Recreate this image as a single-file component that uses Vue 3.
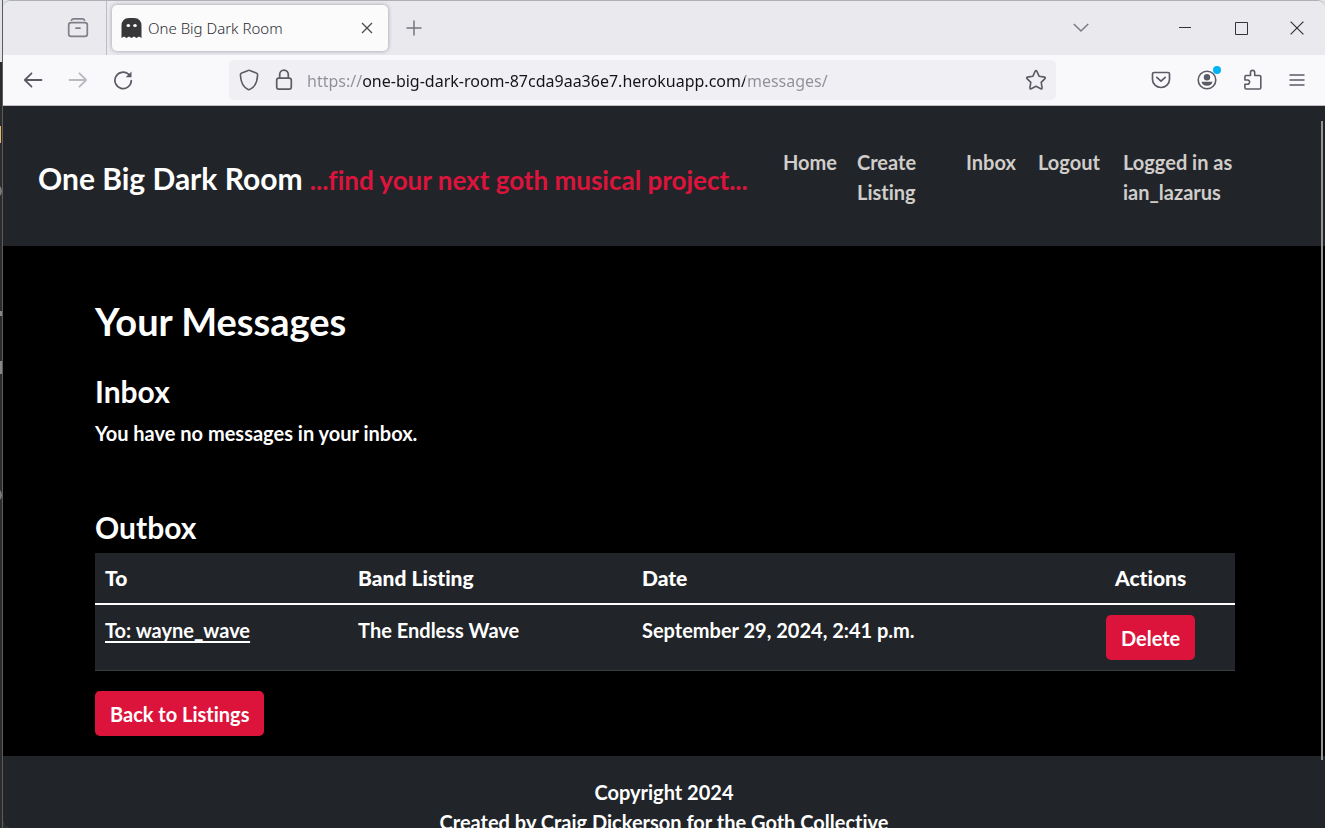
<script setup>
const messages = [
  { to: 'To: wayne_wave', listing: 'The Endless Wave', date: 'September 29, 2024, 2:41 p.m.' },
]
const links = ['Home', 'Create Listing', 'Inbox', 'Logout', 'Logged in as ian_lazarus']
</script>

<template>
  <div class="desktop">
    <div class="behind" aria-hidden="true">
      <i class="folder"></i><i class="ring first"></i><i class="dot"></i><i class="box"></i><i class="ring second"></i>
    </div>
    <div class="window">
      <div class="tabs">
        <button class="icon view" aria-label="Recent browsing">
          <svg width="22" height="22" viewBox="0 0 22 22" fill="none" stroke="#807f89" stroke-width="1.7" stroke-linecap="round">
            <path d="M4.5 3.2 Q5 1.8 6.5 1.8 H15.5 Q17 1.8 17.5 3.2" />
            <rect x="1.7" y="5.7" width="18.6" height="13.6" rx="2.4" />
            <path d="M9 11.2h4" />
          </svg>
        </button>
        <div class="tab">
          <svg width="21" height="20" viewBox="0 0 21 20">
            <path fill="#38383b" d="M.5 20V8Q.5 .3 8 0h5q7.500 .3 7.500 8v12l-2.500-1.500-2.500 1.500-2.500-1.500-2.500 1.500-2.500-1.500-2.500 1.500-2.500-1.500z" />
            <ellipse cx="7.300" cy="7.500" rx="1.800" ry="1.500" fill="#fff" />
            <ellipse cx="14" cy="7.500" rx="1.800" ry="1.500" fill="#fff" />
          </svg>
          <span class="title">One Big Dark Room</span>
          <button class="icon" aria-label="Close tab">
            <svg width="12" height="12" viewBox="0 0 12 12" stroke="#4b4b52" stroke-width="1.3"><path d="M1 1l10 10M11 1L1 11" /></svg>
          </button>
        </div>
        <button class="icon plus" aria-label="New tab">
          <svg width="16" height="16" viewBox="0 0 16 16" stroke="#77767f" stroke-width="1.500"><path d="M8 .5v15M.5 8h15" /></svg>
        </button>
        <div class="controls">
          <button class="icon" aria-label="List all tabs">
            <svg width="16" height="10" viewBox="0 0 16 10" fill="none" stroke="#7c7b84" stroke-width="1.600"><path d="M.8 1l7.200 7 7.200-7" /></svg>
          </button>
          <button class="icon" aria-label="Minimize">
            <svg width="12" height="12" viewBox="0 0 12 12" stroke="#333339"><path d="M0 5.500h12" /></svg>
          </button>
          <button class="icon" aria-label="Maximize">
            <svg width="13" height="13" viewBox="0 0 13 13" fill="none" stroke="#333339"><path d="M.5 .5h12v12H.5z" /></svg>
          </button>
          <button class="icon" aria-label="Close window">
            <svg width="14" height="14" viewBox="0 0 14 14" stroke="#333339" stroke-width="1.200"><path d="M.6 .6l12.800 12.800M13.400 .6L.6 13.400" /></svg>
          </button>
        </div>
      </div>

      <div class="toolbar">
        <div class="history">
          <button class="icon" aria-label="Back">
            <svg width="20" height="16" viewBox="0 0 20 16" fill="none" stroke="#5b5b66" stroke-width="1.800" stroke-linecap="round" stroke-linejoin="round"><path d="M18.500 8H2M8.500 1.300L1.800 8l6.700 6.700" /></svg>
          </button>
          <button class="icon" aria-label="Forward" disabled>
            <svg width="20" height="16" viewBox="0 0 20 16" fill="none" stroke="#b9b9c0" stroke-width="1.800" stroke-linecap="round" stroke-linejoin="round"><path d="M1.500 8H18M11.500 1.300L18.200 8l-6.700 6.700" /></svg>
          </button>
          <button class="icon" aria-label="Reload">
            <svg width="20" height="20" viewBox="0 0 20 20" fill="none" stroke="#5b5b66" stroke-width="1.700" stroke-linecap="round"><path d="M18.300 10.500A8.200 8.200 0 1 1 15.500 4.200" /><path d="M18.500 1.500v5.800h-5.800z" fill="#5b5b66" stroke="none" /></svg>
          </button>
        </div>
        <div class="address">
          <svg width="20" height="22" viewBox="0 0 20 22" fill="none" stroke="#5b5b62" stroke-width="1.600" stroke-linejoin="round"><path d="M10 1.300Q10.700 1.300 11.300 1.700L17.300 4Q18.700 4.500 18.600 6C18.300 13 16 18 10.900 20.400Q10 20.800 9.100 20.400C4 18 1.700 13 1.400 6Q1.300 4.500 2.700 4L8.700 1.700Q9.300 1.300 10 1.300z" /></svg>
          <svg width="18" height="22" viewBox="0 0 18 22" fill="none" stroke="#5b5b62" stroke-width="1.700"><rect x="1.700" y="9.200" width="14.600" height="11" rx="2.200" /><path d="M4.700 9V5.500a4.300 4.300 0 0 1 8.600 0V9" /></svg>
          <input type="text" aria-label="Address" value="https://one-big-dark-room-87cda9aa36e7.herokuapp.com/messages/" />
          <button class="icon" aria-label="Bookmark this page">
            <svg width="22" height="22" viewBox="0 0 22 22" fill="none" stroke="#5b5b62" stroke-width="1.600" stroke-linejoin="round"><path d="M10.200 2.200Q11 1 11.800 2.200L14.200 7.300 19.500 8.100Q20.900 8.500 20 9.600L16.200 13.400 17.100 18.800Q17.200 20.400 15.800 19.800L11 17.200 6.200 19.800Q4.800 20.400 4.900 18.800L5.800 13.400 2 9.600Q1.100 8.500 2.500 8.100L7.800 7.300z" /></svg>
          </button>
        </div>
        <div class="extras">
          <button class="icon" aria-label="Save to Pocket">
            <svg width="20" height="18" viewBox="0 0 20 18" fill="none" stroke="#5b5b66" stroke-width="1.700" stroke-linecap="round" stroke-linejoin="round"><path d="M3 1.500h14Q18.500 1.500 18.500 3v5.500a8.500 8 0 0 1-17 0V3Q1.500 1.500 3 1.500zM5.800 6.300L10 10.200l4.200-3.900" /></svg>
          </button>
          <button class="icon account" aria-label="Account">
            <svg width="20" height="20" viewBox="0 0 20 20"><circle cx="10" cy="10" r="8.800" fill="none" stroke="#5b5b66" stroke-width="1.600" /><circle cx="10" cy="7.300" r="3.200" fill="#5b5b66" /><path d="M4.500 11.800h11q-.8 4-5.500 4t-5.500-4z" fill="#5b5b66" /></svg>
            <span class="badge"></span>
          </button>
          <button class="icon" aria-label="Extensions">
            <svg width="20" height="22" viewBox="0 0 20 22" fill="none" stroke="#5b5b66" stroke-width="1.600" stroke-linejoin="round"><path d="M3.200 6.500H7.500V3.500a2.100 2.100 0 0 1 4.200 0V6.500H16.500Q17.800 6.500 17.800 7.800V18.700Q17.800 20 16.500 20H3.200Q1.900 20 1.900 18.700V15.200H4.500a2.100 2.100 0 0 0 0-4.200H1.900V7.800Q1.900 6.500 3.200 6.500z" /></svg>
          </button>
          <button class="icon" aria-label="Menu">
            <svg width="16" height="14" viewBox="0 0 16 14" stroke="#5b5b66" stroke-width="1.500"><path d="M.5 2h15M.5 7h15M.5 12h15" /></svg>
          </button>
        </div>
      </div>

      <div class="page">
        <header>
          <a class="brand" href="#">One Big Dark Room <span>...find your next goth musical project...</span></a>
          <nav><a v-for="link in links" :key="link" href="#">{{ link }}</a></nav>
        </header>
        <main>
          <h1>Your Messages</h1>
          <section>
            <h2>Inbox</h2>
            <p>You have no messages in your inbox.</p>
          </section>
          <section>
            <h2>Outbox</h2>
            <table>
              <thead>
                <tr><th>To</th><th>Band Listing</th><th>Date</th><th class="actions">Actions</th></tr>
              </thead>
              <tbody>
                <tr v-for="m in messages" :key="m.date">
                  <td><a href="#">{{ m.to }}</a></td>
                  <td>{{ m.listing }}</td>
                  <td>{{ m.date }}</td>
                  <td class="actions"><button class="btn">Delete</button></td>
                </tr>
              </tbody>
            </table>
          </section>
          <a class="btn" href="#">Back to Listings</a>
        </main>
        <footer>
          <p>Copyright 2024</p>
          <p>Created by Craig Dickerson for the Goth Collective</p>
        </footer>
        <div class="thumb"></div>
      </div>
    </div>
  </div>
</template>

<style>
body { background: #212529; overflow: hidden; }
</style>

<style scoped>
* { box-sizing: border-box; }
h1, h2, p { margin: 0; }
.desktop { display: flex; height: 100vh; overflow: hidden; background: linear-gradient(#dfe3e6 62px, #2b2b2b 62px); font-family: "Noto Sans", sans-serif; }
.behind { position: relative; width: 3px; flex: none; overflow: hidden; border-right: 1px solid #5c5c5c; }
.behind i { position: absolute; left: 0; width: 1px; }
.behind .folder { top: 126px; height: 17px; background: #e8b866; }
.behind .ring { left: -12px; width: 14px; height: 14px; border: 2px solid #7d7a75; border-radius: 50%; background: #34627a; }
.behind .first { top: 184px; }
.behind .second { top: 488px; }
.behind .dot { top: 311px; width: 2px; height: 5px; background: #8b8681; }
.behind .box { top: 361px; width: 2px; height: 13px; border: 2px solid #8b8681; border-left: 0; }
.window { flex: 1; min-width: 0; display: flex; flex-direction: column; border-top: 1px solid #aeb0b6; border-radius: 8px 8px 0 8px; overflow: hidden; background: #f9f9fb; }
.icon { display: flex; align-items: center; justify-content: center; padding: 0; border: 0; background: none; position: relative; }
svg { display: block; flex: none; }

.tabs { display: flex; align-items: center; height: 54px; flex: none; background: #eae9ee; }
.view { width: 104px; height: 54px; padding-left: 46px; border-right: 1px solid #bdbcc4; }
.tab { display: flex; align-items: center; gap: 6px; width: 276px; height: 46px; margin-left: 5px; padding: 0 15px 0 9px; border-radius: 5px; background: #fbfbfb; box-shadow: 0 0 4px #9c9ba3; }
.title { flex: 1; font-size: 15px; font-weight: 300; color: #2c2c33; white-space: nowrap; }
.plus { margin-left: 18px; }
.controls { display: flex; margin-left: auto; }
.controls .icon { width: 56px; height: 54px; }
.controls .icon:first-child { margin-right: 48px; }

.toolbar { display: flex; align-items: center; height: 51px; flex: none; background: #f9f9fb; border-bottom: 1px solid #bfbfc4; }
.history { display: flex; gap: 25px; padding-left: 20px; }
.address { display: flex; align-items: center; flex: 1; height: 40px; margin-left: 96px; padding: 0 9px 0 10px; border-radius: 5px; background: #f0f0f4; }
.address svg + svg { margin-left: 16px; }
.address input { flex: 1; min-width: 0; height: 40px; margin-left: 14px; padding: 2px 0 0; border: 0; outline: 0; font: 16px "Noto Sans", sans-serif; color: transparent; background: linear-gradient(90deg, #8f8f97 55px, #15141a 55px 438px, #8f8f97 438px); -webkit-background-clip: text; background-clip: text; }
.extras { display: flex; align-items: center; gap: 26px; margin-left: 95px; padding-right: 20px; }
.badge { position: absolute; top: -4px; right: -4px; width: 8px; height: 8px; border-radius: 50%; background: #00b3f4; }

.page { position: relative; flex: 1; min-height: 0; overflow: hidden; background: #000; color: #fff; font: 700 20px/30px Lato, "Noto Sans", sans-serif; font-variant-ligatures: none; }
header { display: flex; align-items: center; min-height: 140px; padding: 2px 35px 0; background: #212529; }
.brand { flex: 0 0 745px; padding-top: 4px; color: #fff; font-size: 30px; line-height: 45px; text-decoration: none; white-space: nowrap; }
.brand span { color: #dc143c; font-size: 26px; }
nav { display: grid; grid-template-columns: 54px 89px 52px 65px minmax(120px, 150px); gap: 20px; height: 60px; }
nav a { color: #d0cdca; text-decoration: none; }
main { padding: 52px 90px 20px 92px; }
h1 { font-size: 38px; line-height: 46px; font-weight: 700; }
h2 { font-size: 30px; line-height: 36px; font-weight: 700; }
section { margin-top: 29px; }
section p { margin-top: 9px; }
section + section { margin-top: 61px; }
table { width: 100%; margin: 8px 0 20px; border-collapse: collapse; table-layout: fixed; background: #212529; }
th, td { padding: 10px; text-align: left; vertical-align: top; border-bottom: 1px solid #3a3e42; }
th { width: 22.2%; font-size: 21px; font-weight: 900; border-bottom: 2px solid #fff; }
th:nth-child(2) { width: 24.9%; }
th:nth-child(3) { width: 38.1%; }
th.actions { width: 14.8%; }
.actions { text-align: center; }
td a { color: #fff; text-underline-offset: 3px; }
.btn { display: inline-block; vertical-align: top; padding: 8px 15px 7px; border: 0; border-radius: 5px; background: #dc143c; color: #fff; font: inherit; text-decoration: none; }
footer { min-height: 120px; padding-top: 21px; background: #212529; text-align: center; }
.thumb { position: absolute; top: 15px; right: 2px; width: 2px; height: 639px; background: #959595; }
</style>
